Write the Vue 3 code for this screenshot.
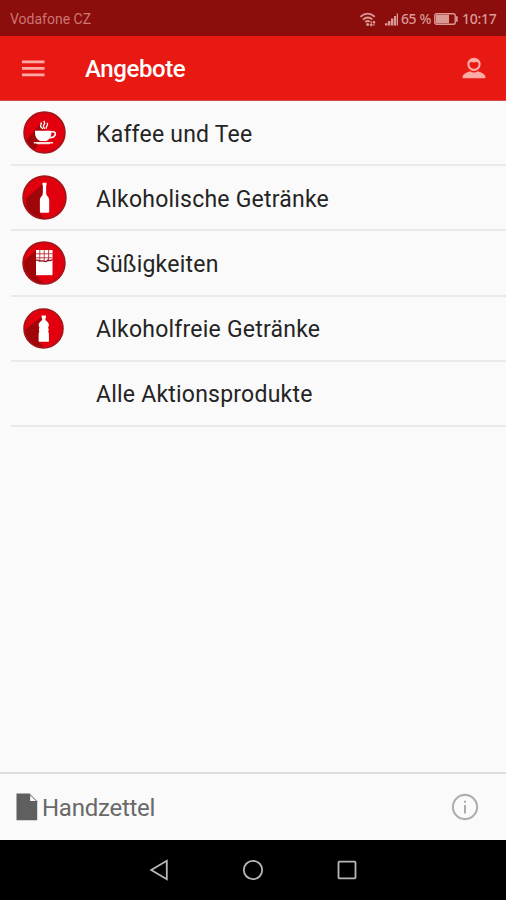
<template>
  <div class="screen">
    <div class="status-bar">
      <span class="carrier">Vodafone CZ</span>
      <svg class="wifi" width="17" height="15" viewBox="0 0 17 15" fill="none" stroke="currentColor">
        <path d="M.4 4.8Q7.6-1.5 14.8 4.8M3 7.6Q7.6 3.4 12.4 7.4M5.3 10.2Q7.6 8 9.8 9.8" stroke-width="1.8" />
        <circle cx="7.6" cy="12.4" r="1.5" fill="currentColor" stroke="none" />
        <path d="M11.2 9v4.8M9.9 12.4l1.3 1.5 1.3-1.5M14 13.8V9.2M12.7 10.6L14 9.2l1.3 1.4" stroke-width="1.1" />
      </svg>
      <svg class="signal" width="14" height="13" viewBox="0 0 14 13" fill="currentColor">
        <path d="M0 10.2h2.4v2.2H0zM2.9 8h2.5v4.4H2.9zM6 5.5h2.4v6.9H6zM9 3h2.1v9.4H9zM11.7.5H13v11.9h-1.3z" />
      </svg>
      <span class="percent">65 %</span>
      <svg class="battery" width="25" height="12" viewBox="0 0 25 12">
        <rect x=".8" y=".8" width="20.4" height="10.4" rx="1.8" fill="none" stroke="currentColor" stroke-width="1.4" />
        <rect x="1.8" y="1.8" width="13.2" height="8.4" fill="currentColor" />
        <path d="M22 3.2h1.7v5.6H22" fill="currentColor" />
      </svg>
      <span class="clock">10:17</span>
    </div>

    <header class="app-bar">
      <svg class="menu" width="23" height="17" viewBox="0 0 23 17" fill="currentColor">
        <path d="M0 .5h22.5v2.8H0zM0 7h22.5v2.8H0zM0 13.4h22.5v2.8H0z" />
      </svg>
      <h1>Angebote</h1>
      <svg class="user" width="24" height="22" viewBox="0 0 24 22">
        <path d="M.6 21.2v-1.6c0-2 4.2-4.6 7.5-5.4q4 2.4 7.8 0c3.3.8 7.5 3.4 7.5 5.4v1.6z" fill="currentColor" />
        <circle cx="12" cy="7.3" r="5.6" fill="none" stroke="currentColor" stroke-width="2.1" />
        <path d="M7 6.2Q6.8 2.2 12 2t5 4.2q-1.8-1.7-5-.8-3.2-.9-5 .8" fill="currentColor" />
      </svg>
    </header>

    <ul class="categories">
      <li v-for="item in categories" :key="item.label">
        <span class="icon-slot" :class="item.icon">
          <svg v-if="item.icon" :width="item.size" :height="item.size" viewBox="0 0 44 44">
            <circle cx="22" cy="22" r="21" fill="#e2000f" />
            <path :d="item.shadow" fill="#a00609" />
            <circle cx="22" cy="22" r="20.9" fill="none" stroke="#a3151b" stroke-width="1.7" />

            <g v-if="item.icon === 'coffee'" fill="#fff">
              <path d="M12.3 20.3H29v2c0 4-2.2 7.4-5.2 8.4h-6.3c-3-1-5.2-4.4-5.2-8.4z" />
              <path d="M28.5 21.2h2.2c3.8 0 3.5 6.1-3.8 6.1" fill="none" stroke="#fff" stroke-width="1.7" />
              <path d="M11 31.6h19.8v1.6H28l-1.1.9H14.6l-1.1-.9H11z" fill="#ffdede" />
              <path d="M20.5 18.2q-3.6-2.3-2.2-4.1 1.2-1.2-.3-2.2M22.4 18.2q-2.6-2.4-.9-4.1 1.5-1.9-.4-4M24.1 18q-.9-1.6.5-2.8 1.3-1.7-.1-3" fill="none" stroke="#fff" stroke-width="1.3" />
            </g>

            <path
              v-else-if="item.icon === 'wine'"
              d="M20 7.6h4v2l-.4.6v7.3q0 2.1 1.5 3.6c1 1 1.5 2.3 1.5 3.6V36q0 .8-.8.8h-7.5q-.8 0-.8-.8V24.7c0-1.3.5-2.6 1.5-3.6q1.4-1.5 1.4-3.6v-7.3L20 9.6z"
              fill="#fff"
            />

            <g v-else-if="item.icon === 'chocolate'">
              <path d="M14 9h16.5v25.2H14z" fill="#fff" />
              <path d="M17.8 9v11M22.2 9v11M26.6 9v11M14 12.8h16.5M14 16.8h16.5" stroke="#c1262d" stroke-width=".9" />
              <path d="M14 19.2q2.2-.4 3.8 1 2.2-.8 4 0 2.7 1.1 4-1.1 2 1.4 4.7-.7" fill="none" stroke="#8e1118" stroke-width="1.3" />
            </g>

            <path
              v-else
              d="M20 8h4.6v2.6h-.5v2.2l2.5 2.4q1.2 1.2 1.2 3.1 0 1.4-.9 2.5.6 1 .6 2.3 0 1.6-.5 2.5.8 1 .8 2.2v7.5q0 1-1 1h-9q-1 0-1-1v-7.5q0-1.2.8-2.2-.5-.9-.5-2.5 0-1.3.6-2.3-.9-1.1-.9-2.5 0-1.9 1.2-3.1l2.5-2.4v-2.2H20z"
              fill="#fff"
            />
          </svg>
        </span>
        <span class="label">{{ item.label }}</span>
      </li>
    </ul>

    <footer class="flyer-bar">
      <svg width="22" height="28" viewBox="0 0 22 28">
        <path d="M.5.5h13l7.7 7.7v19H.5z" fill="#5f5f5f" />
        <path d="M14.2 2.2v5.7h5.7z" fill="#fafafa" />
      </svg>
      <span class="flyer-label">Handzettel</span>
      <svg class="info" width="28" height="28" viewBox="0 0 28 28">
        <circle cx="14" cy="14" r="12.1" fill="none" stroke="#afafaf" stroke-width="2.1" />
        <path d="M13 7.8h2v2h-2zM13 12h2v8.5h-2z" fill="#acacac" />
      </svg>
    </footer>

    <nav class="system-nav">
      <svg width="22" height="22" viewBox="0 0 22 22"><path d="M18.8 1.8v18.4L3.2 11z" /></svg>
      <svg width="22" height="22" viewBox="0 0 22 22"><circle cx="11" cy="11" r="9.2" /></svg>
      <svg width="22" height="22" viewBox="0 0 22 22"><rect x="2.5" y="2.7" width="17" height="16.6" rx=".7" /></svg>
    </nav>
  </div>
</template>

<script setup>
const categories = [
  { label: 'Kaffee und Tee', icon: 'coffee', size: 43, shadow: 'M3 30L18.5 12l3 8H12.3q0 7.5 5.2 10.4l-5 9.1Q5.5 36 3 30z' },
  { label: 'Alkoholische Getränke', icon: 'wine', size: 45, shadow: 'M4 23L20 9v10l-2.6 4v13.8l3.5 5.6C11 42.4 2.5 34.5 4 23z' },
  { label: 'Süßigkeiten', icon: 'chocolate', size: 44, shadow: 'M2.3 20L14 9v25.2l7.5 8.2C10 42 .5 31 2.3 20z' },
  { label: 'Alkoholfreie Getränke', icon: 'bottle', size: 41, shadow: 'M2.5 23L20 9.5v3.3l-3 4v18.3l5 7.2C10.5 42 2 34 2.5 23z' },
  { label: 'Alle Aktionsprodukte', icon: null, size: 0, shadow: '' },
]
</script>

<style>
body {
  margin: 0;
}
</style>

<style scoped>
.screen {
  display: flex;
  flex-direction: column;
  width: 506px;
  height: 900px;
  overflow: hidden;
  background: #fafafa;
  font-family: Roboto, 'Liberation Sans', sans-serif;
}

svg {
  display: block;
  flex: none;
}

.status-bar {
  display: flex;
  align-items: center;
  box-sizing: border-box;
  height: 36px;
  padding: 2px 9px 0 10px;
  background: #8b0d0c;
  color: #d99a95;
  font-size: 14px;
  white-space: nowrap;
}

.carrier {
  flex: 1;
  color: #cb7772;
}

.wifi {
  margin-right: 8px;
}

.percent,
.clock {
  font-family: 'Noto Sans', Roboto, sans-serif;
  font-size: 14px;
  font-weight: 500;
  line-height: 16px;
}

.percent {
  width: 31px;
  margin-left: 2px;
  letter-spacing: -0.4px;
}

.battery {
  margin-left: 2px;
}

.clock {
  width: 35px;
  margin-left: 3px;
  letter-spacing: -0.3px;
}

.app-bar {
  display: flex;
  align-items: center;
  box-sizing: border-box;
  height: 65px;
  padding: 0 20px 0 22px;
  border-bottom: 1px solid #d94844;
  background: #e81812;
  color: #ffaaa6;
}

h1 {
  flex: 1;
  margin: 2px 0 0 40px;
  color: #fff;
  font-size: 24px;
  font-weight: 500;
  letter-spacing: -0.4px;
  line-height: 28px;
}

.categories {
  flex: 1;
  margin: 0;
  padding: 0 0 0 11px;
  list-style: none;
}

li {
  display: flex;
  align-items: center;
  box-sizing: border-box;
  height: 65.2px;
  border-bottom: 2px solid #e9e9e9;
}

.icon-slot {
  display: flex;
  justify-content: center;
  box-sizing: border-box;
  width: 66px;
}

.icon-slot.bottle {
  padding-right: 2px;
}

.label {
  margin: 4px 0 0 19px;
  color: #242424;
  font-size: 23px;
  letter-spacing: 0.22px;
  line-height: 28px;
  white-space: nowrap;
}

.flyer-bar {
  display: flex;
  align-items: center;
  box-sizing: border-box;
  height: 68px;
  padding: 0 27px 0 16px;
  border-top: 2px solid #dedede;
}

.flyer-label {
  flex: 1;
  margin: 2px 0 0 4px;
  color: #696969;
  font-size: 24px;
  letter-spacing: -0.25px;
}

.system-nav {
  display: flex;
  align-items: center;
  justify-content: center;
  gap: 72px;
  height: 60px;
  background: #000;
}

.system-nav svg {
  fill: none;
  stroke: #b7b7b7;
  stroke-width: 1.8;
}
</style>
